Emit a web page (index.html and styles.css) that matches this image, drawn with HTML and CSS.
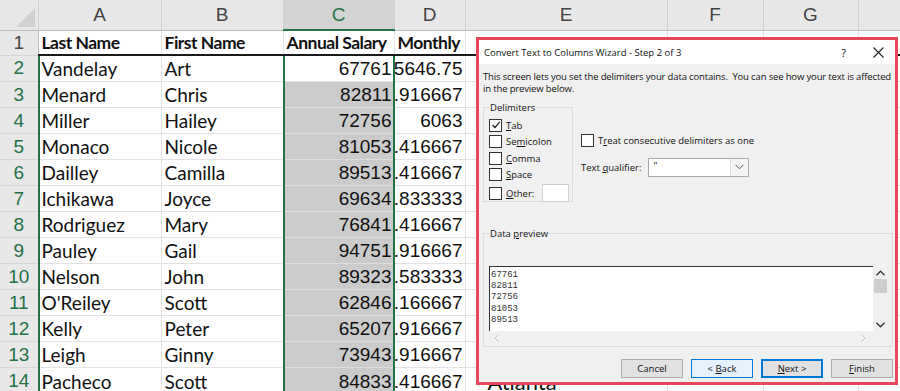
FILE: index.html
```html
<!DOCTYPE html>
<html lang="en">

<head>
    <meta charset="UTF-8">
    <meta name="viewport" content="width=device-width, initial-scale=1.0">
    <title>Convert Text to Columns</title>
    <link rel="stylesheet" href="styles.css">
</head>

<body>
    <div id="sheet">
        <table id="grid">
            <colgroup>
                <col class="w-hdr">
                <col class="w-a">
                <col class="w-b">
                <col class="w-c">
                <col class="w-d">
                <col class="w-e">
                <col class="w-f">
                <col class="w-g">
                <col class="w-h">
            </colgroup>
            <tr class="colHead">
                <th class="corner"><span class="tri"></span></th>
                <th>A</th><th>B</th><th class="sel">C</th><th>D</th><th>E</th><th>F</th><th>G</th><th></th>
            </tr>
            <tr class="titles">
                <th class="rowHead plain">1</th>
                <td>Last Name</td><td>First Name</td><td>Annual Salary</td><td>Monthly</td><td></td><td></td><td></td><td></td>
            </tr>
            <tr>
                <th class="rowHead">2</th>
                <td>Vandelay</td><td>Art</td><td class="num active">67761</td><td class="num month"><div class="clip">5646.75</div></td><td></td><td></td><td></td><td></td>
            </tr>
            <tr>
                <th class="rowHead">3</th>
                <td>Menard</td><td>Chris</td><td class="num hl">82811</td><td class="num month"><div class="clip">6900.916667</div></td><td></td><td></td><td></td><td></td>
            </tr>
            <tr>
                <th class="rowHead">4</th>
                <td>Miller</td><td>Hailey</td><td class="num hl">72756</td><td class="num month"><div class="clip">6063</div></td><td></td><td></td><td></td><td></td>
            </tr>
            <tr>
                <th class="rowHead">5</th>
                <td>Monaco</td><td>Nicole</td><td class="num hl">81053</td><td class="num month"><div class="clip">6754.416667</div></td><td></td><td></td><td></td><td></td>
            </tr>
            <tr>
                <th class="rowHead">6</th>
                <td>Dailley</td><td>Camilla</td><td class="num hl">89513</td><td class="num month"><div class="clip">7459.416667</div></td><td></td><td></td><td></td><td></td>
            </tr>
            <tr>
                <th class="rowHead">7</th>
                <td>Ichikawa</td><td>Joyce</td><td class="num hl">69634</td><td class="num month"><div class="clip">5802.833333</div></td><td></td><td></td><td></td><td></td>
            </tr>
            <tr>
                <th class="rowHead">8</th>
                <td>Rodriguez</td><td>Mary</td><td class="num hl">76841</td><td class="num month"><div class="clip">6403.416667</div></td><td></td><td></td><td></td><td></td>
            </tr>
            <tr>
                <th class="rowHead">9</th>
                <td>Pauley</td><td>Gail</td><td class="num hl">94751</td><td class="num month"><div class="clip">7895.916667</div></td><td></td><td></td><td></td><td></td>
            </tr>
            <tr>
                <th class="rowHead">10</th>
                <td>Nelson</td><td>John</td><td class="num hl">89323</td><td class="num month"><div class="clip">7443.583333</div></td><td></td><td></td><td></td><td></td>
            </tr>
            <tr>
                <th class="rowHead">11</th>
                <td>O'Reiley</td><td>Scott</td><td class="num hl">62846</td><td class="num month"><div class="clip">5237.166667</div></td><td></td><td></td><td></td><td></td>
            </tr>
            <tr>
                <th class="rowHead">12</th>
                <td>Kelly</td><td>Peter</td><td class="num hl">65207</td><td class="num month"><div class="clip">5433.916667</div></td><td></td><td></td><td></td><td></td>
            </tr>
            <tr>
                <th class="rowHead">13</th>
                <td>Leigh</td><td>Ginny</td><td class="num hl">73943</td><td class="num month"><div class="clip">6161.916667</div></td><td></td><td></td><td></td><td></td>
            </tr>
            <tr>
                <th class="rowHead">14</th>
                <td>Pacheco</td><td>Scott</td><td class="num hl">84833</td><td class="num month"><div class="clip">7069.416667</div></td><td class="city">Atlanta</td><td></td><td></td><td></td>
            </tr>
        </table>

        <!-- selection outlines sit on top of the grid -->
        <div class="selBox" id="selAB"></div>
        <div class="selBox" id="selC"></div>

        <div id="wizard">
            <div class="wizTitle">
                <span class="wizName">Convert Text to Columns Wizard - Step 2 of 3</span>
                <span class="help">?</span>
                <svg class="close" width="11" height="11" viewBox="0 0 11 11">
                    <path d="M0.5 0.5 L10.5 10.5 M10.5 0.5 L0.5 10.5" stroke="#222" stroke-width="1.1" fill="none" />
                </svg>
            </div>

            <div class="wizBody">
                <p class="desc">This screen lets you set the delimiters your data contains.&nbsp; You can see how your text is affected in the preview below.</p>

                <div class="optRow">
                    <fieldset class="group delims">
                        <legend>Delimiters</legend>
                        <label class="chk"><span class="box on"><svg width="10" height="10" viewBox="0 0 10 10"><path d="M1.5 5 L4 7.5 L8.8 1.8" stroke="#222" stroke-width="1.2" fill="none" /></svg></span><span><u>T</u>ab</span></label>
                        <label class="chk"><span class="box"></span><span>Se<u>m</u>icolon</span></label>
                        <label class="chk"><span class="box"></span><span><u>C</u>omma</span></label>
                        <label class="chk"><span class="box"></span><span><u>S</u>pace</span></label>
                        <label class="chk other"><span class="box"></span><span><u>O</u>ther:</span><span class="otherInput"></span></label>
                    </fieldset>

                    <div class="sideOpts">
                        <label class="chk"><span class="box"></span><span>T<u>r</u>eat consecutive delimiters as one</span></label>
                        <div class="qualifier">
                            <span>Text <u>q</u>ualifier:</span>
                            <div class="combo">
                                <span class="comboVal">"</span>
                                <span class="comboBtn">
                                    <svg width="9" height="6" viewBox="0 0 9 6"><path d="M0.5 0.8 L4.5 4.8 L8.5 0.8" stroke="#555" stroke-width="1" fill="none" /></svg>
                                </span>
                            </div>
                        </div>
                    </div>
                </div>

                <fieldset class="group preview">
                    <legend>Data <u>p</u>review</legend>
                    <div class="scroller">
                        <div class="previewMain">
                            <div class="previewText">67761<br>82811<br>72756<br>81053<br>89513</div>
                            <div class="vbar">
                                <svg width="9" height="6" viewBox="0 0 9 6"><path d="M0.5 5.2 L4.5 1.2 L8.5 5.2" stroke="#333" stroke-width="1.3" fill="none" /></svg>
                                <span class="thumb"></span>
                                <span class="vspace"></span>
                                <svg width="9" height="6" viewBox="0 0 9 6"><path d="M0.5 0.8 L4.5 4.8 L8.5 0.8" stroke="#333" stroke-width="1.3" fill="none" /></svg>
                            </div>
                        </div>
                        <div class="hbar">
                            <svg width="5" height="8" viewBox="0 0 5 8"><path d="M4.5 0.5 L1 4 L4.5 7.5" stroke="#c4c4c4" stroke-width="1" fill="none" /></svg>
                            <svg width="5" height="8" viewBox="0 0 5 8"><path d="M0.5 0.5 L4 4 L0.5 7.5" stroke="#c4c4c4" stroke-width="1" fill="none" /></svg>
                        </div>
                    </div>
                </fieldset>

                <div class="buttons">
                    <span class="btn"><span>Cancel</span></span>
                    <span class="btn hover"><span>&lt; <u>B</u>ack</span></span>
                    <span class="btn default"><span><u>N</u>ext &gt;</span></span>
                    <span class="btn"><span><u>F</u>inish</span></span>
                </div>
            </div>
        </div>
    </div>
</body>

</html>
```

FILE: styles.css
```css
body {
    margin: 0;
    overflow: hidden;
    background: #fff;
}

#sheet {
    position: relative;
    width: 900px;
    height: 391px;
    overflow: hidden;
}

#grid {
    table-layout: fixed;
    border-collapse: collapse;
    width: 900px;
}

.w-hdr { width: 38px; }
.w-a { width: 123px; }
.w-b { width: 122px; }
.w-c { width: 111px; }
.w-d { width: 71px; }
.w-e { width: 202px; }
.w-f { width: 96px; }
.w-g { width: 95px; }
.w-h { width: 42px; }

#grid td {
    height: 25px;
    padding: 0 3px;
    border: 1px solid #e2e2e2;
    font-family: Lato, "Liberation Sans", sans-serif;
    font-size: 19px;
    color: #111;
    white-space: nowrap;
    overflow: hidden;
}

#grid tr:last-child td {
    border-bottom: none;
}

.colHead th {
    height: 29px;
    padding: 0;
    background: #e8e8e8;
    border-right: 1px solid #d2d2d2;
    border-bottom: 1px solid #bcbcbc;
    font-family: "Liberation Sans", Arial, sans-serif;
    font-weight: normal;
    font-size: 19px;
    color: #444;
}

.colHead th.sel {
    background: #d3d3d3;
    color: #217346;
    border-bottom: 2px solid #217346;
}

.corner {
    position: relative;
}

.tri {
    position: absolute;
    right: 3px;
    bottom: 3px;
    width: 0;
    height: 0;
    border-left: 19px solid transparent;
    border-bottom: 19px solid #d0d0d0;
}

.rowHead {
    padding: 0;
    background: #e8e8e8;
    border-bottom: 1px solid #d6d6d6;
    border-right: 1px solid #bcbcbc;
    font-family: "Liberation Sans", Arial, sans-serif;
    font-weight: normal;
    font-size: 19px;
    color: #217346;
    text-align: center;
}

.rowHead.plain {
    color: #444;
}

#grid .titles td {
    height: 23px;
    font-weight: bold;
    font-size: 17.5px;
    letter-spacing: -0.5px;
    border-bottom: 2px solid #1a1a1a;
}

#grid td.num {
    text-align: right;
    padding-right: 2px;
    font-family: "Liberation Sans", Arial, sans-serif;
    font-size: 19px;
}

#grid td.month {
    padding-left: 0;
}

#grid td.hl {
    background: #cbcbcb;
    border-color: #cbcbcb #cbcbcb #dcdcdc;
}

.clip {
    display: flex;
    justify-content: flex-end;
    overflow: hidden;
}

#grid td.city {
    padding-left: 22px;
    font-size: 22px;
}

.selBox {
    position: absolute;
    top: 56px;
    height: 360px;
    border: 2px solid #217346;
    border-top: none;
    box-sizing: border-box;
}

#selAB {
    left: 38px;
    width: 247px;
}

#selC {
    left: 283px;
    width: 112px;
}

/* wizard dialog */
#wizard {
    position: absolute;
    left: 476px;
    top: 37px;
    width: 422px;
    height: 348px;
    box-sizing: border-box;
    border: 3px solid #e5485a;
    background: #f0f0f0;
    font-family: "Open Sans", "Noto Sans", sans-serif;
    font-size: 9.5px;
    color: #111;
}

.wizTitle {
    display: flex;
    align-items: center;
    height: 24px;
    padding: 0 11px 0 5px;
    background: #fff;
    font-size: 9.5px;
}

.wizName {
    flex: 1;
}

.help {
    margin-right: 27px;
    font-size: 11px;
}

.wizBody {
    padding: 0 2px 0 4px;
}

.desc {
    margin: 7px 0 0 0;
    line-height: 11.5px;
    letter-spacing: -0.15px;
}

.optRow {
    display: flex;
    margin-top: 7px;
}

.group {
    margin: 0;
    min-width: 0;
    border: 1px solid #dcdcdc;
}

.group legend {
    padding: 0 1px;
    line-height: 13px;
}

.delims {
    width: 90px;
    height: 101px;
    box-sizing: border-box;
    padding: 3px 0 0 5px;
}

.chk {
    display: flex;
    align-items: center;
    height: 16.5px;
}

.box {
    display: inline-flex;
    align-items: center;
    justify-content: center;
    width: 11px;
    height: 11px;
    margin-right: 4px;
    border: 1px solid #333;
    background: #fff;
}

.chk.other {
    height: 20px;
}

.otherInput {
    width: 25px;
    height: 16px;
    margin-left: 8px;
    border: 1px solid #cfcfcf;
    background: #fff;
}

.sideOpts {
    margin: 31px 0 0 8px;
}

.qualifier {
    display: flex;
    align-items: center;
    margin-top: 9px;
}

.combo {
    display: flex;
    width: 99px;
    height: 17px;
    margin-left: 7px;
    border: 1px solid #aaa;
    background: #fff;
}

.comboVal {
    flex: 1;
    padding: 0 0 0 4px;
    line-height: 13px;
}

.comboBtn {
    display: flex;
    align-items: center;
    justify-content: center;
    width: 17px;
    border-left: 1px solid #ddd;
    background: #f4f4f4;
}

.preview {
    height: 120px;
    margin-top: 25px;
    padding: 26px 4px 0 5px;
    box-sizing: border-box;
}

.scroller {
    display: flex;
    flex-direction: column;
}

.previewMain {
    display: flex;
    height: 65px;
}

.previewText {
    flex: 1;
    padding: 3px 0 0 1px;
    border-left: 1px solid #333;
    border-top: 1px solid #333;
    background: #fff;
    font-family: "Liberation Mono", monospace;
    font-size: 9px;
    line-height: 11.2px;
    color: #333;
    overflow: hidden;
}

.vbar {
    display: flex;
    flex-direction: column;
    align-items: center;
    width: 15px;
    padding: 4px 0 3px;
    box-sizing: border-box;
}

.thumb {
    width: 13px;
    height: 14px;
    margin-top: 3px;
    background: #cdcdcd;
}

.vspace {
    flex: 1;
}

.hbar {
    display: flex;
    justify-content: space-between;
    align-items: center;
    height: 13px;
    padding: 0 22px 0 5px;
}

.buttons {
    display: flex;
    justify-content: flex-end;
    gap: 8px;
    margin-top: 12px;
}

.btn {
    display: flex;
    align-items: center;
    justify-content: center;
    width: 62px;
    height: 19px;
    box-sizing: border-box;
    border: 1px solid #adadad;
    background: #e1e1e1;
}

.btn.hover {
    border-color: #0078d7;
    background: #e5f1fb;
}

.btn.default {
    border: 2px solid #0078d7;
}
```
